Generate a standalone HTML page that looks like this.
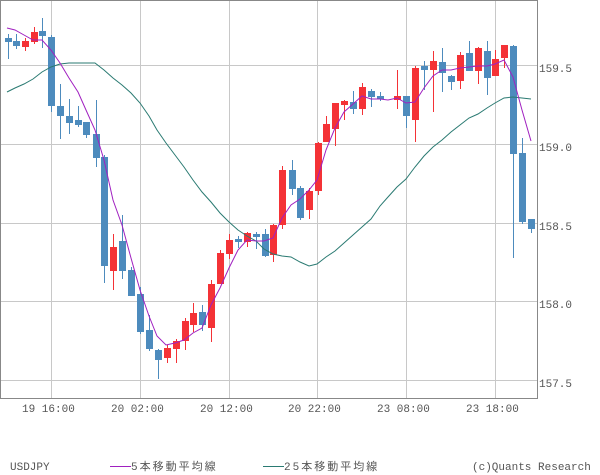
<!DOCTYPE html>
<html><head><meta charset="utf-8"><style>
html,body{margin:0;padding:0;background:#fff;width:600px;height:475px;overflow:hidden}
svg text{font-family:"Liberation Mono","Noto Sans CJK JP",monospace;font-size:11px;fill:#555}
</style></head><body>
<svg width="600" height="475" xmlns="http://www.w3.org/2000/svg">
<g stroke="#c8c8c8" stroke-width="1">
<line x1="0" y1="65.5" x2="537" y2="65.5"/><line x1="0" y1="144.5" x2="537" y2="144.5"/>
<line x1="0" y1="223.5" x2="537" y2="223.5"/><line x1="0" y1="301.5" x2="537" y2="301.5"/>
<line x1="0" y1="380.5" x2="537" y2="380.5"/>
<line x1="51.5" y1="0" x2="51.5" y2="398"/><line x1="140.5" y1="0" x2="140.5" y2="398"/>
<line x1="229.5" y1="0" x2="229.5" y2="398"/><line x1="317.5" y1="0" x2="317.5" y2="398"/>
<line x1="406.5" y1="0" x2="406.5" y2="398"/><line x1="495.5" y1="0" x2="495.5" y2="398"/>
</g>
<rect x="0.5" y="0.5" width="537" height="398" fill="none" stroke="#888" stroke-width="1"/>
<g id="c"></g>
<polyline fill="none" stroke="#2a7a72" stroke-width="1" points="7,92 15,88 24,84 33,79 42,72 51,67 60,64 69,63 78,63 95,63 104,70 113,78 122,85 131,93 140,103 149,116 157,130 166,143 175,155 184,167 193,180 202,192 211,202 220,213 229,222 238,230 247,236 256,241 264,249 273,254 282,256 291,257 300,262 309,266 317,264 326,257 335,251 344,243 353,235 362,227 371,219 380,206 388,197 397,187 406,179 415,167 424,156 433,147 442,140 451,132 460,125 469,118 478,114 487,108 495,103 504,98 513,97 522,98 531,99"/>
<polyline fill="none" stroke="#a020c0" stroke-width="1" points="7,28 15,30 24,35 33,40 42,40 51,50 60,63 69,78 78,92 86,110 95,130 104,160 113,200 122,225 131,258 140,290 149,316 157,336 166,345 175,343 184,340 193,333 202,328 211,305 220,288 229,268 238,250 247,240 256,241 264,241 273,238 282,218 291,205 300,199 309,190 317,180 326,150 335,128 344,112 353,104 362,96 371,99 380,99 388,100 397,98 406,103 415,102 424,88 433,76 442,70 451,70 460,68 469,67 478,66 487,66 495,64 504,60 513,77 522,110 531,141"/>
<text x="539" y="72">159.5</text><text x="539" y="151">159.0</text>
<text x="539" y="230">158.5</text><text x="539" y="308">158.0</text>
<text x="539" y="387">157.5</text>
<text x="22" y="412">19 16:00</text><text x="111" y="412">20 02:00</text>
<text x="200" y="412">20 12:00</text><text x="288" y="412">20 22:00</text>
<text x="377" y="412">23 08:00</text><text x="466" y="412">23 18:00</text>
<text x="10" y="470">USDJPY</text>
<line x1="110" y1="466.5" x2="131" y2="466.5" stroke="#a020c0"/>
<text x="131" y="470" letter-spacing="2">5本移動平均線</text>
<line x1="263" y1="466.5" x2="284" y2="466.5" stroke="#2a7a72"/>
<text x="284" y="470" letter-spacing="2">25本移動平均線</text>
<text x="472" y="470">(c)Quants Research</text>
</svg>
<script>
var d=[[7.5,'b',38,42,34,59],[15.5,'b',41,46,34,49],[24.5,'r',41,47,38,51],[33.5,'r',32,42,27,44],[42,'b',31,36,18,48],[51,'b',37,106,35,112],[60,'b',106,116,84,139],[69,'b',116,123,99,134],[78,'b',120,125,106,127],[86,'b',122,135,122,138],[95.5,'b',134,158,100,167],[104,'b',157,266,155,283],[113,'r',247,271,234,290],[122,'b',241,271,215,279],[131,'b',270,296,267,296],[140,'b',294,332,287,334],[149,'b',330,349,315,351],[157.5,'b',350,360,349,379],[166.5,'r',348,358,345,363],[175.5,'r',341,349,339,363],[184.5,'r',321,341,318,350],[193,'r',313,325,303,332],[202,'b',312,325,305,331],[211,'r',284,328,280,342],[220,'r',253,284,250,284],[229,'r',240,254,234,259],[238,'b',239,242,236,248],[247,'r',233,242,232,247],[256,'b',234,237,232,249],[264.5,'b',234,256,229,257],[273,'r',225,255,224,262],[282,'r',170,225,166,229],[291.5,'b',170,189,160,195],[300,'b',188,218,186,220],[308.5,'r',191,210,188,219],[317.5,'r',143,191,142,195],[326,'r',124,142,116,142],[335,'r',103,129,103,146],[344,'r',101,105,100,120],[353,'b',102,109,91,114],[362,'r',87,109,83,115],[371,'b',91,97,89,107],[380,'b',96,99,92,101],[397,'r',96,100,70,109],[406,'b',96,116,96,128],[415,'r',68,120,66,142],[424,'b',66,70,61,90],[433,'r',61,70,51,112],[442,'b',62,73,48,92],[451,'b',76,82,75,90],[460,'r',55,81,52,89],[469,'b',53,71,41,71],[478,'r',48,71,47,84],[487,'b',51,78,41,95],[495,'r',59,76,50,76],[504,'r',45,58,45,68],[513,'b',46,154,45,258],[522,'b',153,222,138,224],[531,'b',219,229,219,233]];
var s='';d.forEach(function(c){var col=c[1]=='r'?'#f43236':'#4d8bbd';var x=Math.round(c[0]);
s+='<rect x="'+x+'" y="'+c[4]+'" width="1" height="'+(c[5]-c[4])+'" fill="'+col+'"/>';
s+='<rect x="'+(x-3)+'" y="'+c[2]+'" width="7" height="'+Math.max(2,c[3]-c[2])+'" fill="'+col+'"/>';});
document.getElementById('c').innerHTML=s;
</script>
</body></html>
